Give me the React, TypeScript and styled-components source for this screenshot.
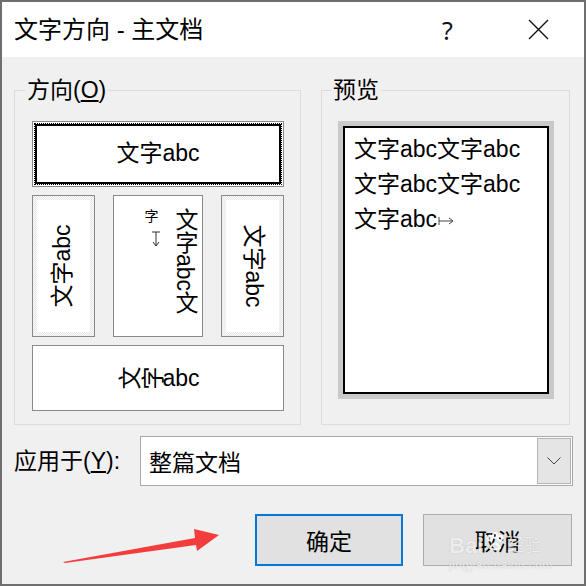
import styled, { createGlobalStyle } from "styled-components";

const GlobalStyle = createGlobalStyle`
  html, body {
    margin: 0;
    padding: 0;
    background: #6f6f6f;
  }
  body {
    font-family: "Liberation Sans", "Noto Sans CJK SC", sans-serif;
    color: #000;
  }
`;

const Window = styled.div`
  position: relative;
  width: 586px;
  height: 586px;
  box-sizing: border-box;
  border: 2px solid #6f6f6f;
  background: #f0f0f0;
  display: flex;
  flex-direction: column;
  overflow: hidden;
`;

const TitleBar = styled.div`
  height: 55px;
  flex: none;
  background: #fff;
  display: flex;
  align-items: center;
  padding-left: 12px;
`;

const Title = styled.div`
  flex: 1;
  font-size: 24px;
  line-height: 30px;
  white-space: nowrap;
`;

const CaptionButton = styled.div`
  width: 91px;
  height: 55px;
  display: flex;
  align-items: center;
  justify-content: center;
  font-family: "Noto Sans", sans-serif;
  font-size: 25px;
  color: #111;
`;

const Body = styled.div`
  flex: 1;
  display: flex;
  flex-direction: column;
  padding-top: 20px;
`;

const GroupsRow = styled.div`
  display: flex;
  gap: 20px;
  padding: 0 14px 0 12px;
`;

const Group = styled.fieldset<{ $width?: number }>`
  margin: 0;
  min-width: 0;
  box-sizing: border-box;
  border: 1px solid #dcdcdc;
  ${(p) => (p.$width ? `width: ${p.$width}px; flex: none;` : "flex: 1;")}
  padding: 18px 16px 13px 17px;
`;

const Legend = styled.legend`
  font-size: 23px;
  line-height: 26px;
  padding: 0 2px;
  margin-left: -7px;
`;

const Key = styled.span`
  text-decoration: underline;
  text-underline-offset: 2px;
`;

const DirectionGrid = styled.div`
  display: grid;
  grid-template-rows: 66px 142px 66px;
  row-gap: 8px;
`;

const OptionRow = styled.div`
  display: grid;
  grid-template-columns: 63px 90px 63px;
  column-gap: 18px;
`;

const OptionBox = styled.div<{ $shaded?: boolean }>`
  box-sizing: border-box;
  border: 1px solid #888a90;
  background: ${(p) =>
    p.$shaded
      ? "repeating-conic-gradient(#e6e6e6 0 25%, #fbfbfb 0 50%) 0 0 / 2px 2px"
      : "#fff"};
  padding: ${(p) => (p.$shaded ? "4px" : "0")};
  display: flex;
  overflow: hidden;
  font-size: 23px;
`;

const Face = styled.div<{ $shiftX?: number }>`
  flex: 1;
  min-width: 0;
  background: #fff;
  display: flex;
  align-items: center;
  justify-content: center;
  padding-left: ${(p) => (p.$shiftX && p.$shiftX > 0 ? p.$shiftX : 0)}px;
  padding-right: ${(p) => (p.$shiftX && p.$shiftX < 0 ? -p.$shiftX : 0)}px;
`;

const SelectedBox = styled.div`
  box-sizing: border-box;
  border: 1px solid #8a8a8a;
  background: #fff;
  padding: 1px;
  display: flex;
`;

const SelectedFace = styled.div`
  flex: 1;
  border: 1px dotted #000;
  box-shadow: inset 0 0 0 2px #000;
  display: flex;
  align-items: center;
  justify-content: center;
  font-size: 23px;
  padding-bottom: 7px;
`;

const Rotated = styled.span<{ $deg: number }>`
  display: inline-block;
  flex: none;
  white-space: nowrap;
  transform: rotate(${(p) => p.$deg}deg);
`;

const StackedFace = styled.div`
  flex: 1;
  min-width: 0;
  display: flex;
  flex-direction: row-reverse;
  align-items: flex-start;
  gap: 12px;
  padding: 12px 6px 0 0;
`;

const VerticalColumn = styled.div`
  writing-mode: vertical-rl;
  font-size: 23px;
  line-height: 23px;
  white-space: nowrap;
`;

const WrapColumn = styled.div`
  display: flex;
  flex-direction: column;
  align-items: center;
  font-size: 14px;
  line-height: 14px;
  padding-top: 1px;
`;

const PreviewFrame = styled.div`
  height: 278px;
  box-sizing: border-box;
  border: 5px solid #c9c9c9;
`;

const PreviewPage = styled.div`
  height: 100%;
  box-sizing: border-box;
  border: 2px solid #000;
  background: #fff;
  padding: 4px 0 0 9px;
  font-size: 23px;
  line-height: 35px;
`;

const PreviewLine = styled.div`
  white-space: nowrap;
  display: flex;
  align-items: center;
`;

const ApplyRow = styled.div`
  display: flex;
  align-items: center;
  margin-top: 11px;
  padding: 0 11px 0 12px;
`;

const Label = styled.label`
  font-size: 23px;
  line-height: 30px;
  white-space: nowrap;
`;

const Combo = styled.div`
  margin-left: auto;
  width: 433px;
  height: 50px;
  box-sizing: border-box;
  border: 1px solid #a9a9a9;
  background: #fff;
  display: flex;
  align-items: center;
`;

const ComboText = styled.div`
  flex: 1;
  padding-left: 8px;
  font-size: 23px;
`;

const DropButton = styled.div`
  width: 34px;
  align-self: stretch;
  margin: 1px;
  box-sizing: border-box;
  border: 1px solid #b4b4b4;
  background: #e5e5e5;
  display: flex;
  align-items: center;
  justify-content: center;
`;

const ButtonsRow = styled.div`
  display: flex;
  justify-content: flex-end;
  gap: 20px;
  margin-top: 28px;
  padding-right: 12px;
`;

const DialogButton = styled.div<{ $primary?: boolean; $width: number }>`
  width: ${(p) => p.$width}px;
  height: 52px;
  box-sizing: border-box;
  background: #e1e1e1;
  border: ${(p) => (p.$primary ? "2px solid #0078d7" : "1px solid #adadad")};
  display: flex;
  align-items: center;
  justify-content: center;
  font-size: 23px;
`;

const Watermark = styled.div`
  position: absolute;
  left: 447px;
  top: 530px;
  color: rgba(255, 255, 255, 0.8);
  text-shadow: 0 0 1px rgba(0, 0, 0, 0.25);
  pointer-events: none;
`;

const WatermarkBrand = styled.div`
  display: flex;
  align-items: flex-end;
  font-size: 22px;
  line-height: 24px;
  font-weight: bold;
`;

const WatermarkSub = styled.div`
  font-size: 12px;
  line-height: 14px;
  letter-spacing: 0.4px;
`;

const Annotation = styled.svg`
  position: absolute;
  left: 58px;
  top: 522px;
`;

const CloseIcon = () => (
  <svg width="21" height="21" viewBox="0 0 21 21">
    <path d="M1 1 L20 20 M20 1 L1 20" stroke="#111" strokeWidth="1.4" fill="none" />
  </svg>
);

const Chevron = () => (
  <svg width="14" height="8" viewBox="0 0 14 8">
    <polyline points="0.5,0.5 7,7 13.5,0.5" stroke="#444" strokeWidth="1" fill="none" />
  </svg>
);

const DownToBar = () => (
  <svg width="10" height="16" viewBox="0 0 10 16" style={{ marginTop: 8, marginLeft: 9 }}>
    <path d="M1 1 H9 M5 1 V15 M2 11 L5 15 L8 11" stroke="#3a2a2a" strokeWidth="1" fill="none" />
  </svg>
);

const ReturnMark = () => (
  <svg width="16" height="10" viewBox="0 0 16 10" style={{ marginLeft: 1, marginTop: 2 }}>
    <path d="M1 1 V9 M1 5 H15 M11 2 L15 5 L11 8" stroke="#444" strokeWidth="1" fill="none" />
  </svg>
);

const Paw = () => (
  <svg width="20" height="20" viewBox="0 0 20 20" style={{ margin: "0 2px 6px" }}>
    <g fill="none" stroke="rgba(255,255,255,0.9)" strokeWidth="2">
      <ellipse cx="5" cy="6" rx="2" ry="2.5" />
      <ellipse cx="10" cy="3.5" rx="2" ry="2.5" />
      <ellipse cx="15" cy="6" rx="2" ry="2.5" />
      <path d="M5 16 Q10 7 15 16 Q10 19 5 16 Z" />
    </g>
  </svg>
);

export default function App() {
  return (
    <>
      <GlobalStyle />
      <Window>
        <TitleBar>
          <Title>文字方向 - 主文档</Title>
          <CaptionButton>?</CaptionButton>
          <CaptionButton>
            <CloseIcon />
          </CaptionButton>
        </TitleBar>
        <Body>
          <GroupsRow>
            <Group $width={287}>
              <Legend>
                方向(<Key>O</Key>)
              </Legend>
              <DirectionGrid>
                <SelectedBox>
                  <SelectedFace>文字abc</SelectedFace>
                </SelectedBox>
                <OptionRow>
                  <OptionBox $shaded>
                    <Face $shiftX={-8}>
                      <Rotated $deg={-90}>文字abc</Rotated>
                    </Face>
                  </OptionBox>
                  <OptionBox>
                    <StackedFace>
                      <VerticalColumn>文字abc文</VerticalColumn>
                      <WrapColumn>
                        字
                        <DownToBar />
                      </WrapColumn>
                    </StackedFace>
                  </OptionBox>
                  <OptionBox $shaded>
                    <Face $shiftX={6}>
                      <Rotated $deg={90}>文字abc</Rotated>
                    </Face>
                  </OptionBox>
                </OptionRow>
                <OptionBox>
                  <Face>
                    <Rotated $deg={-90}>文</Rotated>
                    <Rotated $deg={-90}>字</Rotated>
                    abc
                  </Face>
                </OptionBox>
              </DirectionGrid>
            </Group>
            <Group style={{ paddingRight: 15, paddingLeft: 16, paddingBottom: 0 }}>
              <Legend>预览</Legend>
              <PreviewFrame>
                <PreviewPage>
                  <PreviewLine>文字abc文字abc</PreviewLine>
                  <PreviewLine>文字abc文字abc</PreviewLine>
                  <PreviewLine>
                    文字abc
                    <ReturnMark />
                  </PreviewLine>
                </PreviewPage>
              </PreviewFrame>
            </Group>
          </GroupsRow>
          <ApplyRow>
            <Label>
              应用于(<Key>Y</Key>):
            </Label>
            <Combo>
              <ComboText>整篇文档</ComboText>
              <DropButton>
                <Chevron />
              </DropButton>
            </Combo>
          </ApplyRow>
          <ButtonsRow>
            <DialogButton $primary $width={148}>
              确定
            </DialogButton>
            <DialogButton $width={149}>取消</DialogButton>
          </ButtonsRow>
        </Body>
        <Watermark>
          <WatermarkBrand>
            Bai
            <Paw />
            <span style={{ fontSize: 17, fontWeight: "normal" }}>经验</span>
          </WatermarkBrand>
          <WatermarkSub>jingyan.baidu.com</WatermarkSub>
        </Watermark>
        <Annotation width="164" height="42" viewBox="60 524 164 42">
          <polygon
            points="63,562 195,538 194,529 219,535 197,551 196,545 65,563"
            fill="#f33c3c"
          />
        </Annotation>
      </Window>
    </>
  );
}
